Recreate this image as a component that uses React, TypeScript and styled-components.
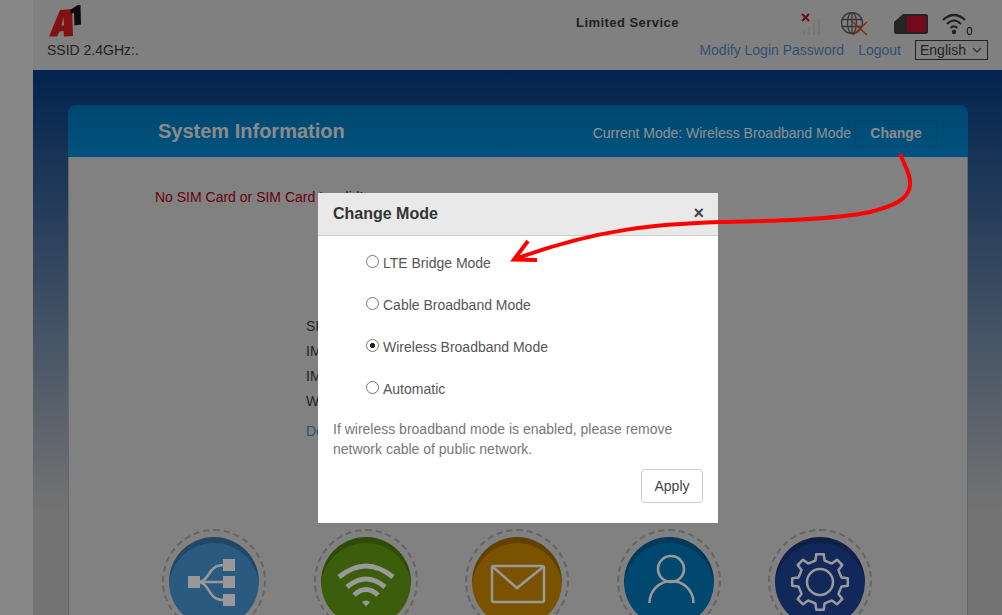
import React from 'react'
import styled, { createGlobalStyle } from 'styled-components'

const GlobalStyle = createGlobalStyle`
  html, body {
    margin: 0;
    height: 615px;
    overflow: hidden;
    background: #dfdfdf;
    font: 14px/20px "Liberation Sans", Arial, sans-serif;
    color: #3a3a3a;
  }
`

const Page = styled.div`
  height: 615px;
  margin-left: 33px;
  display: flex;
  flex-direction: column;
  overflow: hidden;
`

const Header = styled.header`
  height: 70px;
  flex: none;
  display: flex;
  justify-content: space-between;
  background: #d5d5d5;
  padding: 0 14px;
`

const Brand = styled.div`
  display: flex;
  flex-direction: column;
  padding-top: 4px;
`

const Ssid = styled.div`
  margin-top: 2px;
`

const HeaderRight = styled.div`
  width: 412px;
  display: flex;
  flex-direction: column;
`

const StatusRow = styled.div`
  height: 40px;
  display: flex;
  align-items: center;
  padding: 8px 14px 0 0;
  box-sizing: border-box;
`

const ServiceText = styled.div`
  font-weight: bold;
  font-size: 13px;
  letter-spacing: 0.45px;
  margin-right: auto;
  position: relative;
  top: -1px;
`

const StatusIcon = styled.svg<{ $gap: number }>`
  flex: none;
  margin-left: ${({ $gap }) => $gap}px;
`

const LinkRow = styled.div`
  display: flex;
  align-items: center;
  justify-content: flex-end;
  gap: 14px;
`

const TopLink = styled.a`
  color: #5585bd;
  text-decoration: none;
`

const LangSelect = styled.select`
  width: 73px;
  height: 20px;
  appearance: none;
  border: 1px solid #3a3a3a;
  border-radius: 0;
  background: #d5d5d5 url("data:image/svg+xml,%3Csvg xmlns='http://www.w3.org/2000/svg' width='10' height='6'%3E%3Cpath d='M1 1l4 4 4-4' fill='none' stroke='%23555' stroke-width='1.3'/%3E%3C/svg%3E") no-repeat right 5px center;
  color: #3a3a3a;
  padding: 0 0 0 4px;
  font: 14px "Liberation Sans", Arial, sans-serif;
`

const Band = styled.main`
  flex: 1;
  padding: 35px 34px 0 35px;
  background: linear-gradient(#033c84 0, #c0c0c0 440px, #c0c0c0 100%);
`

const Panel = styled.section`
  width: 900px;
  height: 520px;
  display: flex;
  flex-direction: column;
  border-radius: 8px 8px 0 0;
  overflow: hidden;
`

const PanelHead = styled.div`
  height: 52px;
  flex: none;
  display: flex;
  align-items: center;
  padding: 0 31px 0 90px;
  background: linear-gradient(#0076b8, #008ad4);
`

const PanelTitle = styled.h1`
  margin: 0 auto 0 0;
  font-size: 20px;
  font-weight: bold;
  color: #e6e6e6;
`

const ModeText = styled.span`
  margin-top: 4px;
  color: #eee;
`

const ChangeButton = styled.button`
  width: 82px;
  height: 27px;
  margin-left: 4px;
  background: transparent;
  border: 1px solid #0070ae;
  border-radius: 3px;
  color: #e6e6e6;
  font: bold 14px "Liberation Sans", Arial, sans-serif;
  padding: 0;
  position: relative;
  top: 2px;
`

const PanelBody = styled.div`
  flex: 1;
  background: #d7d7d7;
  border-right: 1px solid #aaa;
  border-left: 1px solid #aaa;
  padding: 30px 0 0 86px;
`

const Warning = styled.div`
  color: #b00020;
`

const InfoList = styled.div`
  margin: 109px 0 0 151px;
  display: flex;
  flex-direction: column;
  gap: 5px;
`

const DetailLink = styled.a`
  margin-top: 5px;
  color: #5585bd;
`

const Shortcuts = styled.nav`
  margin: 88px 0 0 7px;
  display: flex;
  gap: 47.5px;
`

const Ring = styled.div`
  width: 104px;
  height: 104px;
  flex: none;
  box-sizing: border-box;
  border: 2px dashed #a8a8a8;
  border-radius: 50%;
  display: flex;
  align-items: center;
  justify-content: center;
`

const Disc = styled.div<{ $color: string }>`
  width: 90px;
  height: 90px;
  margin-top: 2px;
  border-radius: 50%;
  background: ${({ $color }) => $color};
  box-shadow: inset 0 6px 0 rgba(0, 0, 0, 0.2);
  svg {
    display: block;
  }
`

const Backdrop = styled.div`
  position: fixed;
  inset: 0;
  background: rgba(0, 0, 0, 0.4);
`

const Modal = styled.div`
  position: fixed;
  left: 318px;
  top: 193px;
  width: 400px;
  height: 330px;
  background: #fff;
  display: flex;
  flex-direction: column;
`

const ModalHead = styled.div`
  height: 43px;
  flex: none;
  box-sizing: border-box;
  display: flex;
  align-items: center;
  justify-content: space-between;
  padding: 0 14px 0 15px;
  background: #e9e9e9;
  border-bottom: 1px solid #ccc;
`

const ModalTitle = styled.h2`
  margin: 0;
  font-size: 16px;
  font-weight: bold;
  color: #333;
`

const CloseMark = styled.span`
  font-size: 18px;
  font-weight: bold;
  color: #444;
  position: relative;
  top: -1px;
`

const ModeList = styled.div`
  padding: 17px 0 0 45px;
  display: flex;
  flex-direction: column;
  gap: 22px;
`

const ModeOption = styled.label`
  display: flex;
  align-items: center;
  color: #555;
  input {
    appearance: none;
    margin: 0 4px 4px 3px;
    width: 13px;
    height: 13px;
    box-sizing: border-box;
    border: 1px solid #767676;
    border-radius: 50%;
    background: #fff;
  }
  input:checked {
    background: radial-gradient(circle, #222 0 2.2px, #fff 2.9px);
  }
`

const Note = styled.p`
  margin: 20px 0 0;
  padding: 0 15px;
  color: #777;
`

const ModalFoot = styled.div`
  display: flex;
  justify-content: flex-end;
  padding: 10px 15px 0;
`

const ApplyButton = styled.button`
  width: 62px;
  height: 34px;
  padding: 0;
  background: #fff;
  border: 1px solid #ccc;
  border-radius: 4px;
  color: #444;
  font: 14px "Liberation Sans", Arial, sans-serif;
`

const Annotation = styled.svg`
  position: fixed;
  left: 0;
  top: 0;
  pointer-events: none;
`

const gearPath = (() => {
  const pts: string[] = []
  const teeth = 8
  for (let i = 0; i < teeth; i++) {
    const a = (i * Math.PI * 2) / teeth - Math.PI / 2
    const step = (Math.PI * 2) / teeth
    const spots: [number, number][] = [
      [21.5, -0.5 * step],
      [22, -0.27 * step],
      [28, -0.17 * step],
      [28, 0.17 * step],
      [22, 0.27 * step],
    ]
    spots.forEach(([r, d]) => {
      pts.push(`${(45 + r * Math.cos(a + d)).toFixed(1)} ${(45 + r * Math.sin(a + d)).toFixed(1)}`)
    })
  }
  return `M${pts.join('L')}Z`
})()

const A1Logo = () => (
  <svg width="36" height="34" viewBox="0 0 36 34">
    <path
      fill="#d81e1e"
      fillRule="evenodd"
      d="M2 32.5 L13 6 L25 5 L26 32 L17 32.5 L16.5 27 L12.5 27.5 L10 32.5 Z M14.5 21.5 L17 21.5 L16.5 13 Z"
    />
    <path fill="#141414" d="M23 6 L31 1 L33.5 1 L34 20.5 L27.5 21.5 L27 9 L23.5 10 Z" />
  </svg>
)

const App: React.FC = () => (
  <>
    <GlobalStyle />
    <Page>
      <Header>
        <Brand>
          <A1Logo />
          <Ssid>SSID 2.4GHz:.</Ssid>
        </Brand>
        <HeaderRight>
          <StatusRow>
            <ServiceText>Limited Service</ServiceText>
            <StatusIcon $gap={0} width="24" height="24" viewBox="0 0 24 24">
              <g fill="#c6c6c6">
                <rect x="4" y="19" width="2" height="4" />
                <rect x="9" y="15" width="2" height="8" />
                <rect x="14" y="11" width="2" height="12" />
                <rect x="19" y="7" width="2" height="16" />
              </g>
              <path d="M3 2 L10 9 M10 2 L3 9" stroke="#b01830" strokeWidth="2" />
            </StatusIcon>
            <StatusIcon $gap={17} width="28" height="24" viewBox="0 0 28 24" fill="none">
              <g stroke="#5c5c5c" strokeWidth="1.3">
                <circle cx="12" cy="11" r="10.5" />
                <ellipse cx="12" cy="11" rx="4.5" ry="10.5" />
                <path d="M1.5 7.5 H22.5 M1.5 14.5 H22.5 M12 0.5 V21.5" />
              </g>
              <path d="M13 10 L27 23 M27 10 L13 23" stroke="#e05010" strokeWidth="1.5" />
            </StatusIcon>
            <StatusIcon $gap={25} width="36" height="22" viewBox="0 0 36 22">
              <path
                d="M10 1 H33 Q35 1 35 3 V19 Q35 21 33 21 H3 Q1 21 1 19 V9 Z"
                fill="#3f3f3f"
              />
              <rect x="14" y="3" width="19" height="16" fill="#c01030" />
            </StatusIcon>
            <StatusIcon $gap={13} width="32" height="24" viewBox="0 0 32 24" fill="none">
              <g stroke="#3a3a3a" strokeWidth="2.2">
                <path d="M1 8 Q12 -2 23 8" />
                <path d="M5 12 Q12 5 19 12" />
                <path d="M8.5 16 Q12 12.5 15.5 16" />
              </g>
              <circle cx="12" cy="20" r="2.2" fill="#3a3a3a" />
              <ellipse cx="27.5" cy="19" rx="2.2" ry="3.6" stroke="#3a3a3a" strokeWidth="1.2" />
            </StatusIcon>
          </StatusRow>
          <LinkRow>
            <TopLink>Modify Login Password</TopLink>
            <TopLink>Logout</TopLink>
            <LangSelect defaultValue="English">
              <option>English</option>
            </LangSelect>
          </LinkRow>
        </HeaderRight>
      </Header>
      <Band>
        <Panel>
          <PanelHead>
            <PanelTitle>System Information</PanelTitle>
            <ModeText>Current Mode: Wireless Broadband Mode</ModeText>
            <ChangeButton>Change</ChangeButton>
          </PanelHead>
          <PanelBody>
            <Warning>No SIM Card or SIM Card Invalid!</Warning>
            <InfoList>
              <div>SIM Number:</div>
              <div>IMEI:</div>
              <div>IMSI:</div>
              <div>WAN IP Address:</div>
              <DetailLink>Details</DetailLink>
            </InfoList>
            <Shortcuts>
              <Ring>
                <Disc $color="#4996d5">
                  <svg width="90" height="90" viewBox="0 0 90 90" fill="none">
                    <g fill="#fff">
                      <rect x="19" y="39" width="12" height="12" />
                      <rect x="54" y="22" width="12" height="12" />
                      <rect x="54" y="39" width="12" height="12" />
                      <rect x="54" y="57" width="12" height="12" />
                    </g>
                    <path
                      d="M30 45 H55 M30 45 C42 43 38 28 55 28 M30 45 C42 47 38 63 55 63"
                      stroke="#fff"
                      strokeWidth="2.5"
                    />
                  </svg>
                </Disc>
              </Ring>
              <Ring>
                <Disc $color="#649d14">
                  <svg width="90" height="90" viewBox="0 0 90 90" fill="none">
                    <g stroke="#fff" strokeWidth="5">
                      <path d="M18 40 Q45 18 72 40" />
                      <path d="M26 50 Q45 34 64 50" />
                      <path d="M33 58 Q45 47 57 58" />
                    </g>
                    <path d="M41 65 Q45 62 49 65 L45 69.5 Z" fill="#fff" />
                  </svg>
                </Disc>
              </Ring>
              <Ring>
                <Disc $color="#cb8900">
                  <svg width="90" height="90" viewBox="0 0 90 90" fill="none" stroke="#fff" strokeWidth="2.5">
                    <rect x="20" y="29" width="52" height="36" rx="1.5" />
                    <path d="M21 30 L45 51 L71 30" />
                  </svg>
                </Disc>
              </Ring>
              <Ring>
                <Disc $color="#0078b9">
                  <svg width="90" height="90" viewBox="0 0 90 90" fill="none" stroke="#fff" strokeWidth="2.6">
                    <circle cx="47" cy="32" r="13" />
                    <path d="M25.5 66 A 22 22 0 0 1 69.5 66" />
                  </svg>
                </Disc>
              </Ring>
              <Ring>
                <Disc $color="#1e4496">
                  <svg width="90" height="90" viewBox="0 0 90 90" fill="none" stroke="#fff" strokeWidth="2.5" strokeLinejoin="round">
                    <path d={gearPath} />
                    <circle cx="45" cy="45" r="13" />
                  </svg>
                </Disc>
              </Ring>
            </Shortcuts>
          </PanelBody>
        </Panel>
      </Band>
    </Page>
    <Backdrop />
    <Modal>
      <ModalHead>
        <ModalTitle>Change Mode</ModalTitle>
        <CloseMark>×</CloseMark>
      </ModalHead>
      <ModeList>
        <ModeOption><input type="radio" name="mode" />LTE Bridge Mode</ModeOption>
        <ModeOption><input type="radio" name="mode" />Cable Broadband Mode</ModeOption>
        <ModeOption><input type="radio" name="mode" defaultChecked />Wireless Broadband Mode</ModeOption>
        <ModeOption><input type="radio" name="mode" />Automatic</ModeOption>
      </ModeList>
      <Note>If wireless broadband mode is enabled, please remove network cable of public network.</Note>
      <ModalFoot>
        <ApplyButton>Apply</ApplyButton>
      </ModalFoot>
    </Modal>
    <Annotation width="1002" height="615" viewBox="0 0 1002 615" fill="none">
      <path
        d="M900 154 C906 168 911 176 910 186 C908 200 893 206 870 212 C830 220 770 221 720 222 C660 224 600 228 515 259"
        stroke="#ff0000"
        strokeWidth="4"
      />
      <path d="M528 241 L514 259.5 L537 260" stroke="#ff0000" strokeWidth="4" />
    </Annotation>
  </>
)

export default App
